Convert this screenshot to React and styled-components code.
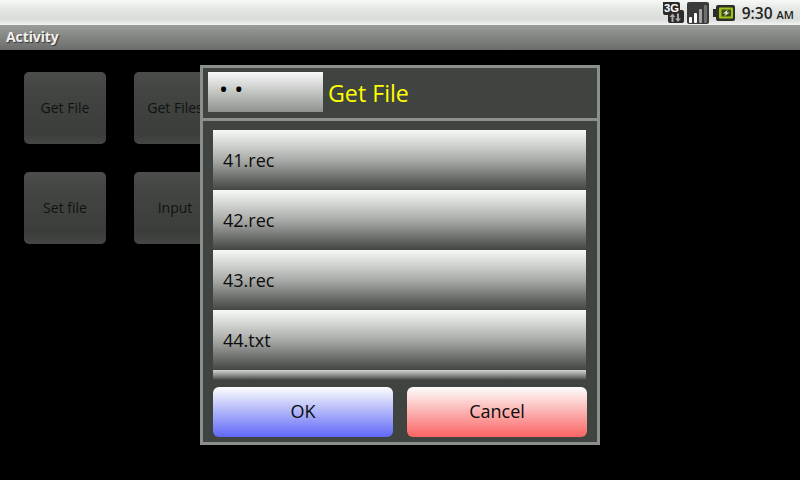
import React from "react";
import styled, { createGlobalStyle } from "styled-components";

const GlobalStyle = createGlobalStyle`
  html, body {
    margin: 0;
    padding: 0;
    background: #000;
  }
  * {
    box-sizing: border-box;
  }
`;

function Signal3G() {
  return (
    <svg width="22" height="23" viewBox="0 0 22 23">
      <path d="M1 1h15a2 2 0 0 1 2 2v6h2a2 2 0 0 1 2 2v9a2 2 0 0 1-2 2H8a2 2 0 0 1-2-2v-6H3a2 2 0 0 1-2-2z" fill="#2a2a2a" />
      <text x="2" y="11" fontFamily="'Liberation Sans', sans-serif" fontSize="11" fontWeight="700" textLength="15" lengthAdjust="spacingAndGlyphs" fill="#fff">3G</text>
      <path d="M9.5 21v-5H7.5l3-3.5 3 3.5h-2v5z" fill="#a8a8a8" />
      <path d="M17 12.5v5h2l-3 3.5-3-3.5h2v-5z" fill="#a8a8a8" />
    </svg>
  );
}

function SignalBars() {
  return (
    <svg width="22" height="22" viewBox="0 0 22 22">
      <rect x="0" y="0" width="22" height="22" rx="2" fill="#3a3a3a" />
      <rect x="2" y="15" width="3" height="6" rx="1" fill="#fff" />
      <rect x="7" y="11" width="3" height="10" rx="1" fill="#fff" />
      <rect x="12" y="7" width="3" height="14" rx="1" fill="#a5a5a5" />
      <rect x="17" y="3" width="3" height="18" rx="1" fill="#6f6f6f" />
    </svg>
  );
}

function Battery() {
  return (
    <svg width="22" height="18" viewBox="0 0 22 18">
      <path d="M5 1h15a2 2 0 0 1 2 2v12a2 2 0 0 1-2 2H5a2 2 0 0 1-2-2v-2H0V5h3V3a2 2 0 0 1 2-2z" fill="#2b2b2b" />
      <rect x="4" y="2.5" width="17" height="13" rx="2" fill="#2f3420" />
      <rect x="6" y="3.5" width="14" height="11" rx="1" fill="#9cc41a" />
      <rect x="8.5" y="5.5" width="9.5" height="7" fill="#3f4a20" />
      <path d="M15 5.5l-5 4h3l-2 3 5.5-4h-3z" fill="#f0f7cc" />
    </svg>
  );
}

export default function App() {
  return (
    <>
      <GlobalStyle />
      <Screen>
        <StatusBar>
          <Signal3G />
          <SignalBars />
          <BatterySlot>
            <Battery />
          </BatterySlot>
          <Clock>
            9:30 <small>AM</small>
          </Clock>
        </StatusBar>
        <TitleBar>Activity</TitleBar>
        <Content>
          <ButtonRow>
            <ActivityButton>Get File</ActivityButton>
            <ActivityButton>Get Files</ActivityButton>
          </ButtonRow>
          <ButtonRow>
            <ActivityButton>Set file</ActivityButton>
            <ActivityButton>Input</ActivityButton>
          </ButtonRow>
        </Content>
        <Dialog>
          <DialogHeader>
            <UpButton>• •</UpButton>
            <DialogTitle>Get File</DialogTitle>
          </DialogHeader>
          <DialogBody>
            <FileList>
              {["41.rec", "42.rec", "43.rec", "44.txt"].map((name) => (
                <FileRow key={name}>{name}</FileRow>
              ))}
              <ListEdge />
            </FileList>
            <Actions>
              <ActionButton $tint="#6068f8">OK</ActionButton>
              <ActionButton $tint="#fb6464">Cancel</ActionButton>
            </Actions>
          </DialogBody>
        </Dialog>
      </Screen>
    </>
  );
}

const Screen = styled.div`
  position: relative;
  width: 800px;
  height: 480px;
  overflow: hidden;
  background: #000;
  font-family: "Open Sans", "Liberation Sans", sans-serif;
`;

const StatusBar = styled.div`
  height: 25px;
  display: flex;
  align-items: center;
  justify-content: flex-end;
  gap: 3px;
  padding-right: 6px;
  background: linear-gradient(#f7f9f7 0%, #e6e8e6 35%, #d9dcd9 75%, #f2f3f2 100%);
`;

const BatterySlot = styled.div`
  display: flex;
  margin-left: 1px;
`;

const Clock = styled.span`
  margin-left: 4px;
  font-size: 15.5px;
  font-weight: 600;
  color: #222;
  white-space: nowrap;
  small {
    font-size: 11px;
  }
`;

const TitleBar = styled.div`
  height: 25px;
  padding-left: 6px;
  line-height: 23px;
  font-size: 14px;
  font-weight: 700;
  letter-spacing: -0.1px;
  color: #f0f0f0;
  text-shadow: 1px 1px 1px #333;
  background: linear-gradient(#9a9c9a, #6b6d6b);
`;

const Content = styled.div`
  display: flex;
  flex-direction: column;
  gap: 28px;
  padding: 22px 0 0 24px;
`;

const ButtonRow = styled.div`
  display: flex;
  gap: 28px;
`;

const ActivityButton = styled.div`
  width: 82px;
  height: 72px;
  padding-bottom: 2px;
  display: flex;
  align-items: center;
  justify-content: center;
  white-space: nowrap;
  border-radius: 5px;
  font-size: 14px;
  color: #101210;
  background: linear-gradient(#4c4e4c 0%, #424542 25%, #3a3d3a 85%, #454745 100%);
`;

const Dialog = styled.div`
  position: absolute;
  left: 200px;
  top: 65px;
  width: 400px;
  height: 380px;
  display: flex;
  flex-direction: column;
  border: 3px solid #8b908b;
  background: #404441;
`;

const DialogHeader = styled.div`
  height: 53px;
  display: flex;
  align-items: center;
  padding: 0 0 3px 5px;
  gap: 5px;
  border-bottom: 3px solid #8b908b;
`;

const UpButton = styled.div`
  width: 115px;
  height: 40px;
  padding: 0 0 0 11px;
  font-size: 24px;
  line-height: 34px;
  color: #000;
  white-space: pre;
  background: linear-gradient(#f8f9f8, #8f928f);
`;

const DialogTitle = styled.div`
  font-size: 23.2px;
  line-height: 30px;
  padding-top: 2px;
  color: #ffff00;
`;

const DialogBody = styled.div`
  flex: 1;
  padding: 9px 10px 5px;
  display: flex;
  flex-direction: column;
`;

const FileList = styled.div`
  height: 250px;
  width: 373px;
  overflow: hidden;
  flex-shrink: 0;
`;

const FileRow = styled.div`
  height: 60px;
  padding-left: 10px;
  line-height: 60px;
  font-size: 18px;
  color: #0c0c0c;
  background: linear-gradient(#f7f9f7 0%, #a8aba8 50%, #434543 100%);
`;

const ListEdge = styled.div`
  height: 10px;
  background: linear-gradient(#d2d5d2 0%, #8f928f 50%, #434543 100%);
`;

const Actions = styled.div`
  margin-top: 7px;
  display: flex;
  gap: 14px;
`;

const ActionButton = styled.div`
  width: 180px;
  height: 50px;
  padding-bottom: 3px;
  display: flex;
  align-items: center;
  justify-content: center;
  border-radius: 6px;
  font-size: 18px;
  color: #0c0c0c;
  background: linear-gradient(#fcfefc, ${(p) => p.$tint});
`;
